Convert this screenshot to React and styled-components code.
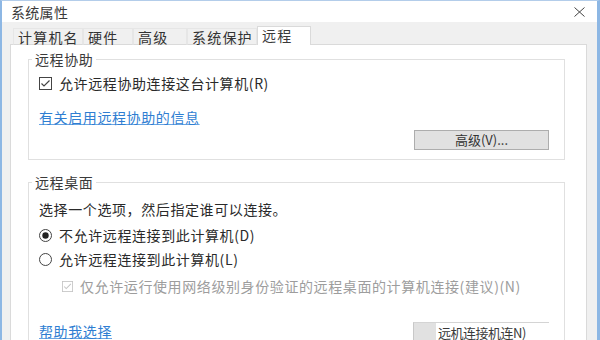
import React from 'react';
import styled, { createGlobalStyle } from 'styled-components';

const Global = createGlobalStyle`
  html, body {
    margin: 0;
    padding: 0;
    background: #ffffff;
  }
  body {
    font-family: "Noto Sans CJK SC", "Noto Sans", sans-serif;
    color: #2a2a2a;
  }
`;

const Window = styled.div`
  width: 600px;
  height: 340px;
  box-sizing: border-box;
  border-left: 2px solid #8db7e4;
  border-right: 3px solid #8db7e4;
  border-top: 1px solid #b3cdea;
  background: #f0f0f0;
  display: flex;
  flex-direction: column;
  overflow: hidden;
`;

const TitleBar = styled.div`
  height: 21px;
  flex-shrink: 0;
  background: #ffffff;
  display: flex;
  align-items: center;
  justify-content: space-between;
  padding: 0 12px 0 9px;
`;

const Title = styled.span`
  font-size: 14px;
  line-height: 16px;
  letter-spacing: 0.3px;
  color: #3a3a3a;
`;

const TabStrip = styled.div`
  height: 22px;
  flex-shrink: 0;
  display: flex;
  align-items: flex-end;
  padding-left: 11px;
  position: relative;
  z-index: 1;
`;

const Tab = styled.div`
  box-sizing: border-box;
  width: ${(p) => p.$w}px;
  height: ${(p) => (p.$active ? 19 : 17)}px;
  margin-bottom: -1px;
  padding-left: 4px;
  font-size: 14px;
  line-height: ${(p) => (p.$active ? 17 : 16)}px;
  letter-spacing: 1.2px;
  color: ${(p) => (p.$active ? '#3a3a3a' : '#333333')};
  background: ${(p) => (p.$active ? '#ffffff' : '#f0f0f0')};
  border: 1px solid ${(p) => (p.$active ? '#dadada' : '#e6e6e6')};
  border-bottom: ${(p) => (p.$active ? 'none' : '1px solid #dadada')};
`;

const Panel = styled.div`
  flex: 1;
  margin: 0 10px 0 8px;
  background: #ffffff;
  border: 1px solid #dadada;
  border-bottom: none;
  padding: 6px 21px 0 17px;
  min-height: 0;
`;

const Group = styled.fieldset`
  margin: ${(p) => (p.$first ? '0' : '14px 0 0')};
  padding: 0 15px ${(p) => (p.$first ? 9 : 0)}px 10px;
  border: 1px solid #e0e0e0;
  min-width: 0;
`;

const Legend = styled.legend`
  margin-left: -7px;
  padding: 0 3px;
  font-size: 14px;
  line-height: 16px;
  letter-spacing: 0.6px;
  color: #3a3a3a;
`;

const Body = styled.div`
  display: flex;
  flex-direction: column;
`;

const Row = styled.div`
  display: flex;
  align-items: center;
  gap: 7px;
  height: 18px;
  margin-top: ${(p) => p.$top}px;
  padding-left: ${(p) => p.$indent || 0}px;
  font-size: 14px;
  line-height: 18px;
  letter-spacing: 0.6px;
  color: ${(p) => (p.$disabled ? '#9d9d9d' : '#2a2a2a')};
  white-space: nowrap;
`;

const Link = styled.a`
  font-size: 14px;
  line-height: 18px;
  letter-spacing: 0.6px;
  color: #2f7ed2;
  text-decoration: underline;
  text-decoration-color: #6aa5e3;
  cursor: pointer;
`;

const LinkRow = styled.div`
  height: 18px;
  margin-top: ${(p) => p.$top}px;
`;

const Button = styled.button`
  align-self: flex-end;
  box-sizing: border-box;
  width: 135px;
  height: 20px;
  margin-top: 8px;
  padding: 0;
  font-family: inherit;
  font-size: 13px;
  line-height: 18px;
  color: #333333;
  background: #e1e1e1;
  border: 1px solid #adadad;
`;

const BottomRow = styled.div`
  display: flex;
  align-items: flex-start;
  justify-content: space-between;
  margin-top: 27px;
  height: 20px;
`;

const SelectButton = styled.button`
  box-sizing: border-box;
  width: 136px;
  height: 20px;
  padding: 0 0 0 24px;
  text-align: left;
  font-family: inherit;
  font-size: 13px;
  line-height: 18px;
  letter-spacing: -0.5px;
  color: #3a3a3a;
  background: linear-gradient(to right, #e1e1e1 0 22px, transparent 22px);
  border: none;
  border-top: 1px solid #d4d4d4;
  border-left: 1px solid #c8c8c8;
`;

const CheckBox = ({ disabled }) => {
  const c = disabled ? '#c4c4c4' : '#444444';
  const size = disabled ? 11 : 13;
  return (
    <svg width={size} height={size} viewBox="0 0 13 13">
      <rect x="0.5" y="0.5" width="12" height="12" fill="#ffffff" stroke={c} />
      <polyline points="2.5,6.5 5,9 10.5,3.5" fill="none" stroke={c} strokeWidth="1.2" />
    </svg>
  );
};

const Radio = ({ checked }) => (
  <svg width="13" height="13" viewBox="0 0 13 13">
    <circle cx="6.5" cy="6.5" r="6" fill="#ffffff" stroke="#444444" />
    {checked && <circle cx="6.5" cy="6.5" r="3.2" fill="#222222" />}
  </svg>
);

const CloseIcon = () => (
  <svg width="11" height="10" viewBox="0 0 11 10">
    <path d="M0.5 0.5 L10.5 9.5 M10.5 0.5 L0.5 9.5" stroke="#444444" strokeWidth="1" fill="none" />
  </svg>
);

const tabs = [
  { key: 'name', label: '计算机名', w: 70 },
  { key: 'hw', label: '硬件', w: 50 },
  { key: 'adv', label: '高级', w: 54 },
  { key: 'prot', label: '系统保护', w: 70 },
  { key: 'remote', label: '远程', w: 54 },
];

export default function App() {
  return (
    <>
      <Global />
      <Window>
        <TitleBar>
          <Title>系统属性</Title>
          <CloseIcon />
        </TitleBar>
        <TabStrip>
          {tabs.map((t) => (
            <Tab key={t.key} $w={t.w} $active={t.key === 'remote'}>
              {t.label}
            </Tab>
          ))}
        </TabStrip>
        <Panel>
          <Group $first>
            <Legend>远程协助</Legend>
            <Body>
              <Row $top={7}>
                <CheckBox />
                允许远程协助连接这台计算机(R)
              </Row>
              <LinkRow $top={12}>
                <Link>有关启用远程协助的信息</Link>
              </LinkRow>
              <Button>高级(V)...</Button>
            </Body>
          </Group>
          <Group>
            <Legend>远程桌面</Legend>
            <Body>
              <Row $top={10}>选择一个选项，然后指定谁可以连接。</Row>
              <Row $top={8}>
                <Radio checked />
                不允许远程连接到此计算机(D)
              </Row>
              <Row $top={6}>
                <Radio />
                允许远程连接到此计算机(L)
              </Row>
              <Row $top={9} $indent={23} $disabled>
                <CheckBox disabled />
                仅允许运行使用网络级别身份验证的远程桌面的计算机连接(建议)(N)
              </Row>
              <BottomRow>
                <Link>帮助我选择</Link>
                <SelectButton>远机连接机连N)</SelectButton>
              </BottomRow>
            </Body>
          </Group>
        </Panel>
      </Window>
    </>
  );
}
